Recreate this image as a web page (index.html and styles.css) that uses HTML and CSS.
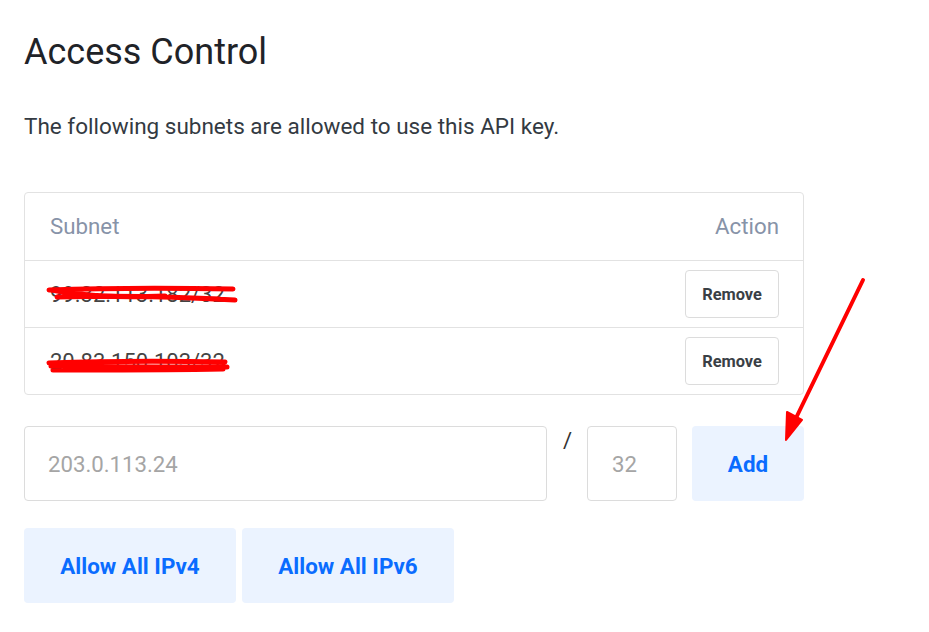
FILE: index.html
```html
<!DOCTYPE html>
<html>
<head>
<meta charset="utf-8">
<link rel="stylesheet" href="styles.css">
</head>
<body>
<div class="page">
  <h1 class="title">Access Control</h1>
  <p class="lead">The following subnets are allowed to use this API key.</p>

  <div class="table">
    <div class="row head">
      <span>Subnet</span>
      <span>Action</span>
    </div>
    <div class="row">
      <span class="subnet">99.32.113.182/32
        <svg class="redact" width="200" height="24" viewBox="0 0 200 24"><path d="M4 5 C60 3 130 3 188 4 M6 5 C40 11 70 13 120 11 M12 12 C80 10 140 12 190 15 M120 12 L175 14" stroke="#ff0000" stroke-width="5" fill="none" stroke-linecap="round"/></svg>
      </span>
      <button class="btn-remove">Remove</button>
    </div>
    <div class="row">
      <span class="subnet">20.83.150.103/32
        <svg class="redact r2" width="200" height="24" viewBox="0 0 200 24"><path d="M4 6 C60 4 130 4 180 5 M6 9 C60 10 130 10 182 10 M8 13 C70 13 130 13 178 12" stroke="#ff0000" stroke-width="5" fill="none" stroke-linecap="round"/></svg>
      </span>
      <button class="btn-remove">Remove</button>
    </div>
  </div>

  <div class="add-row">
    <input class="field ip" placeholder="203.0.113.24">
    <span class="slash">/</span>
    <input class="field mask" placeholder="32">
    <button class="btn-soft add">Add</button>
  </div>

  <div class="allow-row">
    <button class="btn-soft allow">Allow All IPv4</button>
    <button class="btn-soft allow">Allow All IPv6</button>
  </div>
</div>
<svg class="arrow" width="929" height="632" viewBox="0 0 929 632">
  <line x1="863" y1="280" x2="796" y2="418" stroke="#ff0000" stroke-width="4" stroke-linecap="round"/>
  <polygon points="786,440 787,412 802,420" fill="#ff0000" stroke="#ff0000" stroke-width="2" stroke-linejoin="round"/>
</svg>
</body>
</html>
```
FILE: styles.css
```css
* { box-sizing: border-box; }
html, body { margin: 0; padding: 0; background: #fff; }
body { font-family: Roboto, "Noto Sans", sans-serif; color: #212529; }
.page { padding: 28px 0 0 24px; width: 804px; }
.title { font-size: 36px; font-weight: 400; margin: 0; line-height: 48px; color: #1f2328; }
.lead { font-size: 22.5px; margin: 35px 0 0 0; line-height: 30px; color: #333a42; }
.table { margin-top: 51px; border: 1px solid #e2e2e2; border-radius: 4px; }
.row { display: flex; align-items: center; justify-content: space-between; padding: 0 24px 0 25px; height: 67px; border-top: 1px solid #e2e2e2; }
.row.head { border-top: none; height: 67px; font-size: 22.3px; color: #8793a8; padding-bottom: 2px; }
.subnet { position: relative; font-size: 22px; color: #444; }
.redact { position: absolute; left: -5px; top: 3px; width: 200px; }
.redact.r2 { top: 8px; }
.btn-remove { font-family: Roboto, sans-serif; font-size: 16.4px; font-weight: 700; color: #3a3f45; background: #fff; border: 1px solid #dcdcdc; border-radius: 4px; width: 94px; height: 48px; padding: 0; }
.add-row { display: flex; margin-top: 31px; height: 75px; align-items: stretch; }
.field { font-family: Roboto, sans-serif; font-size: 22.2px; border: 1px solid #dcdcdc; border-radius: 4px; padding: 0 0 0 23px; color: #333; outline: none; min-width: 0; }
.field::placeholder { color: #a5a5a5; }
.ip { width: 523px; flex: none; }
.slash { width: 40px; flex: none; font-size: 22px; padding: 2px 0 0 16px; color: #333; }
.mask { width: 90px; flex: none; padding-left: 24px; }
.btn-soft { font-family: Roboto, sans-serif; font-weight: 700; font-size: 22.4px; color: #0a6cff; background: #ebf3ff; border: none; border-radius: 4px; padding: 0; }
.add { width: 112px; flex: none; margin-left: 15px; }
.allow-row { display: flex; gap: 6px; margin-top: 27px; }
.allow { width: 212px; height: 75px; }
.arrow { position: absolute; left: 0; top: 0; pointer-events: none; }
```
